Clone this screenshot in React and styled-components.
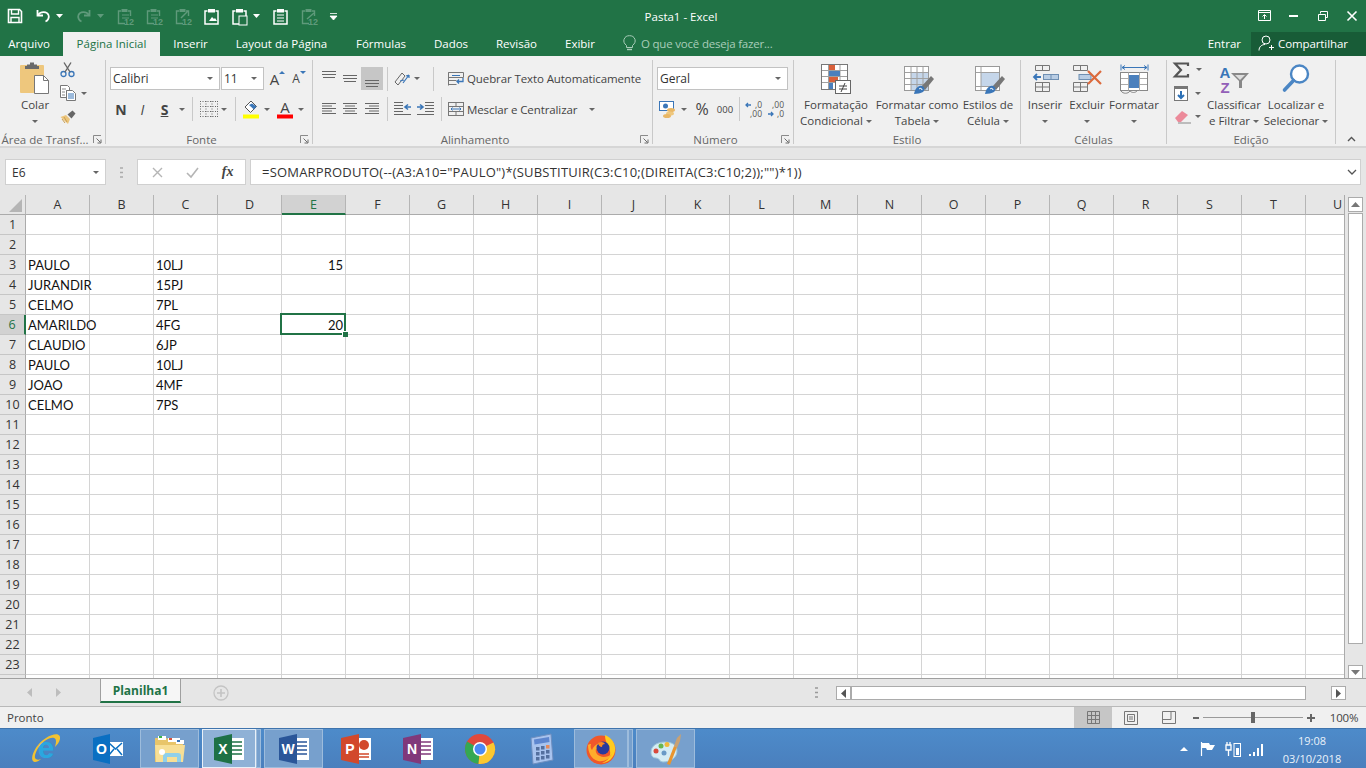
import React from "react";
import styled, { createGlobalStyle } from "styled-components";

const ui = `"Open Sans", "Noto Sans", sans-serif`;
const green = "#217346";
const cols = "ABCDEFGHIJKLMNOPQRSTU".split("");
const rows = Array.from({ length: 24 }, (_, i) => i + 1);

const cells = {
  3: { A: "PAULO", C: "10LJ", E: "15" },
  4: { A: "JURANDIR", C: "15PJ" },
  5: { A: "CELMO", C: "7PL" },
  6: { A: "AMARILDO", C: "4FG", E: "20" },
  7: { A: "CLAUDIO", C: "6JP" },
  8: { A: "PAULO", C: "10LJ" },
  9: { A: "JOAO", C: "4MF" },
  10: { A: "CELMO", C: "7PS" }
};

const Global = createGlobalStyle`
  html, body { margin: 0; padding: 0; background: #f0f0f0; }
  svg { display: block; flex: none; overflow: visible; }
`;

const Page = styled.div`
  width: 1366px;
  height: 768px;
  overflow: hidden;
  display: flex;
  flex-direction: column;
  font-family: ${ui};
  font-size: 11.5px;
  color: #444;
`;

/* title bar */
const TitleBar = styled.div`
  height: 32px;
  flex: none;
  background: ${green};
  display: grid;
  grid-template-columns: 1fr auto 1fr;
  align-items: center;
  color: #fff;
`;
const Qat = styled.div`
  display: flex;
  align-items: center;
  height: 30px;
`;
const QatBtn = styled.div`
  width: ${p => p.$w}px;
  margin-left: ${p => p.$ml || 0}px;
  height: 30px;
  display: flex;
  align-items: center;
  justify-content: center;
  color: ${p => (p.$dim ? "#5f9a7b" : "#fff")};
`;
const Title = styled.div`
  padding-right: 4px;
  font-size: 11.5px;
`;
const WinControls = styled.div`
  display: flex;
  justify-content: flex-end;
  height: 30px;
`;
const WinBtn = styled.div`
  width: 29px;
  display: flex;
  align-items: center;
  justify-content: center;
`;

/* tabs */
const TabBar = styled.div`
  height: 24px;
  flex: none;
  background: ${green};
  display: flex;
  color: #fff;
`;
const Tab = styled.div`
  width: ${p => p.$w}px;
  box-sizing: border-box;
  padding: 0 ${p => p.$pr || 0}px 2px 0;
  display: flex;
  align-items: center;
  justify-content: center;
  background: ${p => (p.$active ? "#f0f0f0" : "transparent")};
  color: ${p => (p.$active ? green : "#fff")};
`;
const TellMe = styled.div`
  margin-left: 14px;
  padding-bottom: 2px;
  display: flex;
  align-items: center;
  gap: 5px;
  color: #a9cdb9;
  letter-spacing: -0.2px;
  flex: 1;
`;
const SignIn = styled.div`
  display: flex;
  align-items: center;
  margin-right: 10px;
  padding-bottom: 2px;
`;
const Share = styled.div`
  width: 115px;
  display: flex;
  align-items: center;
  padding: 0 0 2px 7px;
  gap: 4px;
  box-sizing: border-box;
  background: #185c37;
  letter-spacing: -0.1px;
`;

/* ribbon */
const Ribbon = styled.div`
  height: 92px;
  flex: none;
  box-sizing: border-box;
  padding-top: 4px;
  display: flex;
  background: #f0f0f0;
  border-bottom: 2px solid #d6d6d6;
`;
const Group = styled.div`
  width: ${p => p.$w}px;
  flex: none;
  height: 84px;
  box-sizing: border-box;
  border-right: 1px solid #c9c9c9;
  display: flex;
  flex-direction: column;
`;
const Body = styled.div`
  height: 71px;
  flex: none;
  display: flex;
  padding-left: ${p => p.$pl || 0}px;
`;
const Foot = styled.div`
  height: 16px;
  flex: none;
  display: flex;
  align-items: center;
`;
const Label = styled.div`
  flex: 1;
  text-align: center;
  color: #666;
  font-size: 11.5px;
  white-space: nowrap;
`;
const Launcher = styled.div`
  width: 14px;
  margin-right: 1px;
  display: flex;
  justify-content: center;
`;
const Collapse = styled.div`
  flex: 1;
  height: 84px;
  display: flex;
  align-items: flex-end;
  justify-content: center;
`;
const Stack = styled.div`
  padding-top: 7px;
  display: flex;
  flex-direction: column;
  gap: 7px;
`;
const Row = styled.div`
  height: ${p => p.$h || 23}px;
  display: flex;
  align-items: center;
`;
const Btn = styled.div`
  width: ${p => p.$w}px;
  height: 100%;
  flex: none;
  display: flex;
  align-items: center;
  justify-content: center;
  background: ${p => (p.$active ? "#c6c6c6" : "transparent")};
`;
const Letter = styled.span`
  font-family: ${p => (p.$serif ? `"Liberation Serif", serif` : ui)};
  font-weight: ${p => (p.$bold ? 700 : 400)};
  font-style: ${p => (p.$italic ? "italic" : "normal")};
  text-decoration: ${p => (p.$under ? "underline" : "none")};
  font-size: ${p => p.$size || 13}px;
  color: #444;
`;
const Sep = styled.div`
  width: ${p => p.$w}px;
  height: 24px;
  flex: none;
  display: flex;
  justify-content: center;
  &::before {
    content: "";
    width: 1px;
    background: #c9c9c9;
  }
`;
const Caret = styled.i`
  display: inline-block;
  width: 0;
  height: 0;
  border-left: 3px solid transparent;
  border-right: 3px solid transparent;
  border-top: 3px solid #666;
  margin-left: ${p => p.$ml || 0}px;
  vertical-align: middle;
`;
const Combo = styled.div`
  width: ${p => p.$w}px;
  margin-left: ${p => p.$ml || 0}px;
  height: 23px;
  box-sizing: border-box;
  flex: none;
  background: #fff;
  border: 1px solid #c2c2c2;
  display: flex;
  align-items: center;
  justify-content: space-between;
  padding: 0 6px 0 2px;
  color: #333;
  font-size: 12px;
`;
const Command = styled.div`
  display: flex;
  align-items: center;
  gap: 3px;
  padding-left: 3px;
  white-space: nowrap;
  font-size: 11.5px;
  letter-spacing: -0.1px;
`;
const BigBtn = styled.div`
  width: ${p => p.$w}px;
  flex: none;
  display: flex;
  flex-direction: column;
  align-items: center;
  white-space: nowrap;
`;
const BigIcon = styled.div`
  height: 37px;
  display: flex;
  align-items: flex-start;
  justify-content: center;
  padding-top: ${p => p.$pt ?? 3}px;
  box-sizing: border-box;
`;
const BigText = styled.div`
  height: 16px;
  line-height: 16px;
  display: flex;
  align-items: center;
`;
const SmallCol = styled.div`
  width: ${p => p.$w}px;
  margin-top: -2px;
  flex: none;
  display: flex;
  flex-direction: column;
`;
const SmallRow = styled.div`
  height: 23.5px;
  display: flex;
  align-items: center;
  padding-left: ${p => p.$pl || 0}px;
  gap: ${p => p.$gap || 7}px;
`;

/* formula bar */
const FormulaBar = styled.div`
  height: 47px;
  flex: none;
  box-sizing: border-box;
  background: #e6e6e6;
  padding: 11px 5px 10px 5px;
  display: flex;
`;
const FieldBox = styled.div`
  background: #fff;
  border: 1px solid #d0d0d0;
  box-sizing: border-box;
  display: flex;
  align-items: center;
  color: #333;
  font-size: 12px;
`;
const NameBox = styled(FieldBox)`
  width: 101px;
  padding: 0 6px;
  justify-content: space-between;
`;
const Dots = styled.div`
  width: 31px;
  display: flex;
  align-items: center;
  justify-content: center;
`;
const FxBox = styled(FieldBox)`
  width: 109px;
  justify-content: space-around;
  margin-right: 4px;
  padding: 0 0 0 2px;
  color: #aaa;
`;
const Formula = styled(FieldBox)`
  flex: 1;
  padding: 0 3px 0 11px;
  justify-content: space-between;
  white-space: nowrap;
  font-size: 13px;
  letter-spacing: 0.2px;
`;

/* sheet */
const Sheet = styled.div`
  height: 483px;
  flex: none;
  display: flex;
  background: #e6e6e6;
`;
const GridClip = styled.div`
  width: 1345px;
  height: 483px;
  overflow: hidden;
  background: #fff;
  border-right: 1px solid #ababab;
  box-sizing: border-box;
`;
const Grid = styled.div`
  display: grid;
  grid-template-columns: 26px repeat(21, 64px);
  grid-auto-rows: 20px;
  width: 1370px;
  color: #111;
`;
const Corner = styled.div`
  background: #e6e6e6;
  border-right: 1px solid #b5b5b5;
  border-bottom: 1px solid #ababab;
  box-sizing: border-box;
  display: flex;
  align-items: flex-end;
  justify-content: flex-end;
  padding: 0 3px 2px 0;
`;
const ColHead = styled.div`
  box-sizing: border-box;
  display: flex;
  align-items: center;
  justify-content: center;
  font-size: 12.5px;
  color: ${p => (p.$on ? green : "#333")};
  background: ${p => (p.$on ? "#d2d2d2" : "#e6e6e6")};
  border-right: 1px solid #b5b5b5;
  border-bottom: ${p => (p.$on ? `2px solid ${green}` : "1px solid #ababab")};
`;
const RowHead = styled.div`
  box-sizing: border-box;
  display: flex;
  align-items: center;
  justify-content: center;
  font-size: 12.5px;
  color: ${p => (p.$on ? green : "#333")};
  background: ${p => (p.$on ? "#d2d2d2" : "#e6e6e6")};
  border-bottom: 1px solid #c6c6c6;
  border-right: ${p => (p.$on ? `2px solid ${green}` : "1px solid #ababab")};
`;
const Cell = styled.div`
  box-sizing: border-box;
  position: relative;
  border-right: 1px solid #d4d4d4;
  border-bottom: 1px solid #d4d4d4;
  display: flex;
  align-items: center;
  justify-content: ${p => (p.$num ? "flex-end" : "flex-start")};
  padding: 0 2px;
  font-family: "Lato", sans-serif;
  font-size: 13px;
  white-space: nowrap;
`;
const Selection = styled.div`
  position: absolute;
  left: -2px;
  right: -1px;
  top: -2px;
  bottom: -1px;
  border: 2px solid ${green};
  z-index: 2;
  &::after {
    content: "";
    position: absolute;
    right: -4px;
    bottom: -4px;
    width: 5px;
    height: 5px;
    background: ${green};
    border: 1px solid #fff;
    border-right-width: 0;
    border-bottom-width: 0;
  }
`;
const VScroll = styled.div`
  flex: 1;
  padding: 2px 3px 0 3px;
  display: flex;
  flex-direction: column;
`;
const ScrollBtn = styled.div`
  width: ${p => p.$w || 15}px;
  height: ${p => p.$h || 15}px;
  box-sizing: border-box;
  flex: none;
  background: #fff;
  border: 1px solid #ababab;
  display: flex;
  align-items: center;
  justify-content: center;
`;
const VThumb = styled.div`
  width: 15px;
  height: 431px;
  box-sizing: border-box;
  flex: none;
  margin: 1px 0 21px;
  background: #fff;
  border: 1px solid #ababab;
`;

/* sheet tabs */
const SheetBar = styled.div`
  height: 29px;
  flex: none;
  box-sizing: border-box;
  background: #e6e6e6;
  border-top: 1px solid #9f9f9f;
  border-bottom: 1px solid #b9b9b9;
  display: flex;
`;
const NavBtn = styled.div`
  width: 29px;
  display: flex;
  align-items: center;
  justify-content: center;
  margin-left: ${p => p.$ml || 0}px;
`;
const SheetTab = styled.div`
  width: 81px;
  height: 24px;
  margin-left: 27.5px;
  box-sizing: border-box;
  flex: none;
  background: #f6f6f6;
  border-left: 1px solid #9f9f9f;
  border-right: 1px solid #9f9f9f;
  border-bottom: 2px solid ${green};
  color: ${green};
  font-weight: 700;
  font-size: 12px;
  display: flex;
  align-items: center;
  justify-content: center;
`;
const AddSheet = styled.div`
  margin-left: 32px;
  display: flex;
  align-items: center;
  flex: 1;
`;
const HScroll = styled.div`
  width: 509px;
  margin-right: 21px;
  padding-top: 7px;
  display: flex;
`;
const HTrack = styled.div`
  width: 455px;
  height: 14px;
  box-sizing: border-box;
  flex: none;
  background: #fff;
  border: 1px solid #ababab;
  margin-right: 25px;
`;
const DotsH = styled.div`
  width: 30px;
  display: flex;
  align-items: center;
  padding-left: 9px;
  box-sizing: border-box;
`;

/* status bar */
const StatusBar = styled.div`
  height: 21px;
  flex: none;
  background: #f0f0f0;
  display: flex;
  align-items: center;
  padding-left: 7px;
`;
const StatusText = styled.div`
  flex: 1;
`;
const ViewBtn = styled.div`
  width: 38px;
  height: 21px;
  display: flex;
  align-items: center;
  justify-content: center;
  background: ${p => (p.$active ? "#c6c6c6" : "transparent")};
`;
const ZoomSign = styled.div`
  width: ${p => p.$w}px;
  display: flex;
  justify-content: center;
`;
const ZoomTrack = styled.div`
  width: 100px;
  height: 11px;
  display: flex;
  justify-content: center;
  background: linear-gradient(#9a9a9a, #9a9a9a) center / 100% 1px no-repeat;
`;
const ZoomThumb = styled.div`
  width: 4px;
  background: #666;
`;
const ZoomValue = styled.div`
  width: 48px;
  text-align: center;
  padding-left: 4px;
  box-sizing: border-box;
  letter-spacing: -0.2px;
`;

/* taskbar */
const Taskbar = styled.div`
  height: 40px;
  flex: none;
  box-sizing: border-box;
  background: linear-gradient(#4d8bca, #4a7fbd);
  border-top: 1px solid #3f74ad;
  display: flex;
  padding-left: 16px;
  gap: 3px;
`;
const TaskSlot = styled.div`
  width: 59px;
  height: 39px;
  box-sizing: border-box;
  flex: none;
  display: flex;
`;
const TaskFace = styled.div`
  flex: 1;
  display: flex;
  align-items: center;
  justify-content: center;
  box-sizing: border-box;
  background: ${p => (p.$active ? "#8fb1d6" : p.$open ? "#77a0cd" : "transparent")};
  border: 1px solid ${p => (p.$active ? "#e8f0f8" : p.$open ? "#9dbcdc" : "transparent")};
`;
const TaskEdge = styled.div`
  width: 5px;
  flex: none;
  box-sizing: border-box;
  background: #77a0cd;
  border: 1px solid #9dbcdc;
`;
const Tray = styled.div`
  margin-left: auto;
  margin-right: 8px;
  display: flex;
  align-items: center;
  color: #fff;
`;
const TrayItem = styled.div`
  width: ${p => p.$w}px;
  display: flex;
  justify-content: center;
`;
const Clock = styled.div`
  width: 92px;
  padding-top: 2px;
  text-align: center;
  font-size: 11px;
  line-height: 18px;
  color: #eaf2fa;
`;

/* icons */
const S = ({ w, h = w, children, ...rest }) => (
  <svg width={w} height={h} viewBox={`0 0 ${w} ${h}`} fill="none" {...rest}>
    {children}
  </svg>
);
const SaveI = () => (
  <S w={16}>
    <path d="M1.5 1.5h11l2 2v11h-13z" stroke="#fff" strokeWidth="1.6" />
    <path d="M4.5 2v4h7V2M4 14.5v-5h8v5" stroke="#fff" strokeWidth="1.4" />
  </S>
);
const UndoI = ({ dim }) => (
  <S w={16} style={dim ? { transform: "scaleX(-1)" } : undefined}>
    <path d="M2.5 2v5.5H8" stroke="currentColor" strokeWidth="1.8" />
    <path d="M3 7c3-4 9-3.5 10.5 0 1 2.5-.5 5.5-3 6.5" stroke="currentColor" strokeWidth="1.8" />
  </S>
);
const QCaret = ({ c = "#fff" }) => (
  <S w={7} h={4}>
    <path d="M0 0h7L3.5 4z" fill={c} />
  </S>
);
const QDoc12 = ({ inner }) => (
  <S w={17}>
    <path d="M4 3H1.5v12.5H8M11 3h2.5v5" stroke="currentColor" strokeWidth="1.4" />
    <rect x="4.5" y="1" width="6" height="3" fill="currentColor" />
    {inner}
    <text x="7" y="16.5" fontSize="9" fontFamily="Liberation Sans" fontWeight="700" fill="currentColor">
      12
    </text>
  </S>
);
const QClip = ({ children }) => (
  <S w={17}>
    <path d="M4.5 3H2v13h13V3h-2.5" stroke="currentColor" strokeWidth="1.5" />
    <rect x="5" y="1" width="7" height="3.5" fill="currentColor" />
    {children}
  </S>
);
const PasteI = () => (
  <S w={30} h={32}>
    <rect x="0" y="3" width="24" height="28" rx="1" fill="#eec77d" />
    <path d="M7 4V2.5h3v-2h4v2h3V4h2v3H5V4z" fill="#6a6a6a" />
    <path d="M14.5 13.5h9l5 5v13h-14z" fill="#fff" stroke="#777" />
    <path d="M23.5 13.5v5h5" stroke="#777" />
  </S>
);
const CutI = () => (
  <S w={15}>
    <circle cx="3.5" cy="12" r="2.5" stroke="#3a76b8" strokeWidth="1.3" />
    <circle cx="11.5" cy="12" r="2.5" stroke="#3a76b8" strokeWidth="1.3" />
    <path d="M5 10 11 .5M10 10 4 .5" stroke="#666" strokeWidth="1.4" />
  </S>
);
const CopyI = () => (
  <S w={16}>
    <path d="M.5.5h7l2 2v3h-3v7H.5z" fill="#fff" stroke="#777" />
    <path d="M6.5 5.5h6l3 3v7h-9z" fill="#fff" stroke="#777" />
    <path d="M2 4h4M2 7h3M2 10h3" stroke="#888" />
    <path d="M8 9h6M8 11h6M8 13h6" stroke="#3a76b8" />
  </S>
);
const PainterI = () => (
  <S w={16} h={14}>
    <path d="M.5 7 6 5l4 4-2 5z" fill="#ecc57c" />
    <path d="M2 9l3 4M4 7l3 5" stroke="#c99e52" />
    <path d="m7.5 4.5 5-4 3 3-4 5z" fill="#666" />
  </S>
);
const Launch = () => (
  <S w={9}>
    <path d="M.5 8V.5H8" stroke="#8a8a8a" />
    <path d="m3.5 3.5 4 4M8 4.5V8H4.5" stroke="#6b6b6b" />
  </S>
);
const BordersI = () => (
  <S w={20} h={19}>
    <path d="M1 1.5h18M1 6.5h18M1 11.5h18M1 16.5h18M1.5 1v17M7 1v17M13 1v17M18.5 1v17" stroke="#666" strokeDasharray="1 1.5" />
  </S>
);
const FillI = () => (
  <S w={17} h={19}>
    <path d="M8 1 2 7l5.5 5.5 6-6z" fill="#fff" stroke="#555" />
    <path d="M9 3.5l4.5 3L11 9.5 6 5z" fill="#3a76b8" />
    <rect y="14.5" width="16" height="4" fill="#ffff00" />
  </S>
);
const ColorA = () => (
  <S w={16} h={19}>
    <text x="8" y="13" textAnchor="middle" fontSize="15" fontFamily="Open Sans" fill="#444">
      A
    </text>
    <rect y="14.5" width="16" height="4" fill="#f00" />
  </S>
);
const AlignV = ({ y }) => (
  <S w={14}>
    {[0, 1, 2].map(i => (
      <path key={i} d={`M${i === 2 ? 1 : 0} ${y + i * 3 + 0.5}h${i === 2 ? 12 : 14}`} stroke="#666" />
    ))}
  </S>
);
const AlignH = ({ kind }) => {
  const w = [14, 10, 14, 10, 14];
  return (
    <S w={14} h={12}>
      {w.map((l, i) => {
        const x = kind === "left" ? 0 : kind === "right" ? 14 - l : (14 - l) / 2;
        return <path key={i} d={`M${x} ${i * 2.5 + 0.5}h${l}`} stroke="#666" />;
      })}
    </S>
  );
};
const OrientI = () => (
  <S w={18}>
    <path d="M2 12 9 3l3 3-7 9z" stroke="#666" fill="none" />
    <path d="M7 11l4-1M10 13l6-8m0 0-3 1m3-1v3" stroke="#3a76b8" strokeWidth="1.2" />
  </S>
);
const IndentI = ({ flip }) => (
  <S w={17} h={14} style={flip ? { transform: "scaleX(-1)" } : undefined}>
    <path d="M8 .5h9M8 3.5h9M8 6.5h9M8 9.5h9M0 12.5h17" stroke="#666" />
    <path d="M0 5h5M3 2.5 6 5 3 7.5" stroke="#3a76b8" strokeWidth="1.6" />
  </S>
);
const WrapI = () => (
  <S w={16}>
    <path d="M.5 1.5h15v5H.5zM.5 9.5h8M.5 13.5h8M.5 1.5v13" stroke="#777" />
    <path d="M4 4.5h8" stroke="#3a76b8" />
    <path d="M15 7v3.5H9m2-2-2 2 2 2" stroke="#3a76b8" strokeWidth="1.3" />
  </S>
);
const MergeI = () => (
  <S w={16}>
    <rect x=".5" y="1.5" width="15" height="13" stroke="#777" />
    <path d="M.5 5.5h15M.5 10.5h15M8 1.5v4M8 10.5v4" stroke="#777" />
    <path d="M3 8h10M4.5 6.5 3 8l1.5 1.5m7-3L13 8l-1.500 1.500" stroke="#3a76b8" />
  </S>
);
const CurrencyI = () => (
  <S w={17} h={17}>
    <rect x=".5" y=".5" width="14" height="9" fill="#fff" stroke="#3a76b8" />
    <circle cx="6.5" cy="5" r="2.5" fill="#3a76b8" />
    <ellipse cx="12" cy="9" rx="4" ry="2" fill="#e9b765" />
    <ellipse cx="11" cy="12.5" rx="4" ry="2" fill="#eec77d" />
    <ellipse cx="8" cy="15" rx="4" ry="2" fill="#e9b765" />
  </S>
);
const Decimal = ({ up }) => (
  <S w={16} h={17}>
    <text x="16" y="7" textAnchor="end" fontSize="8.5" fontFamily="Open Sans" fill="#555">
      {up ? ",0" : ",00"}
    </text>
    <text x="16" y="16" textAnchor="end" fontSize="8.5" fontFamily="Open Sans" fill="#555">
      {up ? ",00" : ",0"}
    </text>
    <path d={up ? "M0 4h5M2 2 0 4l2 2" : "M0 13h5M3 11l2 2-2 2"} stroke="#3a76b8" strokeWidth="1.3" />
  </S>
);
const CondI = () => (
  <S w={31} h={31}>
    <rect x=".5" y=".5" width="26" height="25" fill="#fff" stroke="#777" />
    <path d="M7.5 1v24M19 1v24M1 6.5h25M1 12.5h25M1 18.5h25" stroke="#a0a0a0" />
    <rect x="8" y="1" width="6" height="5" fill="#d9603b" />
    <rect x="8" y="7" width="11" height="5" fill="#4b80bd" />
    <rect x="8" y="13" width="9" height="5" fill="#d9603b" />
    <rect x="8" y="19" width="4" height="6" fill="#4b80bd" />
    <rect x="14.5" y="16.5" width="15" height="13" fill="#fff" stroke="#666" />
    <path d="M18 22h8M18 25h8M24 19l-4 9" stroke="#444" />
  </S>
);
const Brush = () => (
  <g transform="translate(-2 -3)">
    <path d="m19 24 10-11 3 3-9 11z" fill="#777" />
    <path d="M12 31c1-5 4-9 8-8 3 1 3 4 1 6-2 1-6 2-9 2z" fill="#3a76b8" />
    <path d="M17 26c1-1 3-1 3 1" stroke="#fff" />
  </g>
);
const TableI = () => (
  <S w={27} h={28}>
    <rect x=".5" y=".5" width="24" height="24" fill="#fff" stroke="#999" />
    <rect x="7" y="6" width="17" height="18" fill="#c5d6ea" />
    <path d="M7 1v23M13 1v23M19 1v23M1 6.5h23M1 12.5h23M1 18.5h23" stroke="#a0a0a0" />
    <Brush />
  </S>
);
const StylesI = () => (
  <S w={27} h={28}>
    <rect x=".5" y=".5" width="24" height="24" fill="#fff" stroke="#999" />
    <rect x="6" y="6" width="18" height="14" fill="#c5d6ea" />
    <path d="M6 1v23M1 6.5h23M1 20.5h23" stroke="#a0a0a0" />
    <Brush />
  </S>
);
const InsertI = () => (
  <S w={27} h={29}>
    <path d="M3.5 1.5h14v5h-14zM10.5 1.5v5M3.5 18.5h14v9h-14zM3.5 23h14M10.5 18.5v9" stroke="#777" />
    <rect x="11.5" y="10.5" width="15" height="5" fill="#b9cde4" stroke="#6f8fb2" />
    <path d="M19 10.5v5" stroke="#6f8fb2" />
    <path d="M9 13H2m3-3-3 3 3 3" stroke="#3a76b8" strokeWidth="1.8" />
  </S>
);
const DeleteI = () => (
  <S w={31} h={29}>
    <path d="M1.5 1.5h14v5h-14zM8.5 1.5v5M1.5 18.5h14v9h-14zM1.5 23h14M8.5 18.5v9" stroke="#777" />
    <rect x="7" y="10.5" width="12" height="5" fill="#b9cde4" stroke="#6f8fb2" />
    <path d="m16 7 13 13M29 7 16 20" stroke="#dc6a3c" strokeWidth="2.2" />
  </S>
);
const FormatI = () => (
  <S w={29} h={31}>
    <path d="M1 .5v6M28 .5v6M2 3.5h25M5 1.5l-3 2 3 2M24 1.5l3 2-3 2" stroke="#3a76b8" />
    <rect x=".5" y="8.5" width="27" height="18" fill="#fff" stroke="#888" />
    <path d="M8.5 8.5v18M19.5 8.5v18M1 14.5h26M1 20.5h26" stroke="#aaa" />
    <rect x="9" y="11" width="10" height="13" fill="#4b80bd" />
    <path d="M1 27c2 3 7 3 9 0M10 27c2 2 5 2 7 0" stroke="#888" />
  </S>
);
const SigmaI = () => (
  <S w={16}>
    <path d="M15 4V1.5H2L8 8l-6 6.5h13V12" stroke="#555" strokeWidth="2.2" />
  </S>
);
const FillDownI = () => (
  <S w={14} h={15}>
    <rect x=".5" y=".5" width="13" height="14" fill="#fff" stroke="#777" />
    <rect x="1" y="1" width="12" height="2" fill="#777" />
    <path d="M7 5v7M4 9l3 3 3-3" stroke="#2b6fb5" strokeWidth="2" />
  </S>
);
const EraserI = () => (
  <S w={17} h={14}>
    <path d="M1 8 8 1l6 4-7 7H4z" fill="#ec8a9a" />
    <path d="M4 13h13" stroke="#888" />
  </S>
);
const SortI = () => (
  <S w={31} h={31}>
    <text x="6" y="14" textAnchor="middle" fontSize="15" fontWeight="700" fontFamily="Liberation Sans" fill="#3a76b8">
      A
    </text>
    <text x="6" y="29" textAnchor="middle" fontSize="15" fontWeight="700" fontFamily="Liberation Sans" fill="#9360b8">
      Z
    </text>
    <path d="M12 9h18l-7 8v7h-3v-7z" fill="#888" />
    <path d="M16 11h10l-5 5z" fill="#ddd" />
  </S>
);
const FindI = () => (
  <S w={28} h={30}>
    <circle cx="17.5" cy="10" r="8.5" fill="#fff" stroke="#4b86c4" strokeWidth="2.4" />
    <path d="M11.5 16.5 2.5 26" stroke="#4b86c4" strokeWidth="3.6" strokeLinecap="round" />
  </S>
);
const Bulb = () => (
  <S w={13} h={16}>
    <path d="M3.5 10.5C1 8.5.5 6.5 1 4.5 2 1.5 4 .7 6.5.7s4.5.8 5.5 3.8c.5 2 0 4-2.5 6v2h-6z" stroke="#a9cdb9" />
    <path d="M4 14.5h5" stroke="#a9cdb9" strokeWidth="1.4" />
  </S>
);
const ShareI = () => (
  <S w={16}>
    <circle cx="8" cy="5" r="4" stroke="#fff" />
    <path d="M1 15.5c0-4 3-6 6-6M11 12.5h5M13.5 10v5" stroke="#fff" />
  </S>
);
const LogoFrame = ({ children }) => (
  <S w={32} h={32}>
    {children}
  </S>
);
const LogoText = ({ x, y, size, children, fill = "#fff" }) => (
  <text x={x} y={y} textAnchor="middle" fontFamily="Liberation Sans" fontWeight="700" fontSize={size} fill={fill}>
    {children}
  </text>
);
const IeLogo = () => (
  <LogoFrame>
    <path d="M3 28C0 24 6 11 16 5 24 0 31 0 30 6c-.5 3-3 6-5 8 1-4 2-8-1-9-4-1-12 3-17 12-2 4-3 8-1 9 1 1 3 1 5 0-3 3-7 4-8 2z" fill="#f1c232" />
    <LogoText x="16" y="25" size="30" fill="#2aa7e0">e</LogoText>
  </LogoFrame>
);
const OutlookLogo = () => (
  <LogoFrame>
    <rect x="16" y="9" width="15" height="14" fill="#fff" />
    <path d="m17 10 6.5 6 6.5-6M17 22l5-6M30 22l-5-6" stroke="#0a6fc2" strokeWidth="1.5" />
    <path d="M1 5 18 1v30L1 27z" fill="#0a6fc2" />
    <LogoText x="9.5" y="21" size="14">O</LogoText>
  </LogoFrame>
);
const FolderLogo = () => (
  <LogoFrame>
    <path d="M1 5h12l2 2h14v22H1z" fill="#e8c56a" />
    <rect x="4" y="3" width="8" height="4" fill="#fff" />
    <rect x="5" y="3" width="3" height="2" fill="#3db54a" />
    <rect x="14" y="5" width="12" height="4" fill="#fff" />
    <rect x="15" y="5" width="3" height="2" fill="#d9503b" />
    <rect x="22" y="7" width="8" height="4" fill="#fff" />
    <rect x="23" y="7" width="3" height="2" fill="#3a76b8" />
    <path d="M1 12h30l-2 17H2z" fill="#f7df96" />
    <path d="M9 29v-6c0-2 1-3 3-3h12c2 0 3 1 3 3v6h-4v-5H13v5z" fill="#8fd0ea" />
    <circle cx="8" cy="19" r="3" fill="#fff" />
  </LogoFrame>
);
const OfficeLogo = ({ color, letter, light }) => (
  <LogoFrame>
    <rect x="14" y="5" width="17" height="22" fill={light} />
    <path d="M18 9h11M18 13h11M18 17h11M18 21h11" stroke={color} strokeWidth="1.5" />
    <path d="M1 5 19 1v30L1 27z" fill={color} />
    <LogoText x="10" y="21" size="14">{letter}</LogoText>
  </LogoFrame>
);
const PptLogo = () => (
  <LogoFrame>
    <path d="M17 5h14v22H17z" fill="#fff" />
    <circle cx="24" cy="12" r="5" fill="#d2482b" />
    <path d="M19 21h10M19 24h10" stroke="#d2482b" strokeWidth="1.5" />
    <path d="M1 5 19 1v30L1 27z" fill="#d2482b" />
    <LogoText x="10" y="21" size="14">P</LogoText>
  </LogoFrame>
);
const ChromeLogo = () => (
  <LogoFrame>
    <circle cx="16" cy="16" r="15" fill="#e0483b" />
    <path d="M16 16 3 8.5A15 15 0 0 0 14.5 31z" fill="#34a853" />
    <path d="M16 16 29.5 9.5A15 15 0 0 1 14.5 31z" fill="#fbc830" />
    <circle cx="16" cy="16" r="7" fill="#fff" />
    <circle cx="16" cy="16" r="5.5" fill="#4a8af4" />
  </LogoFrame>
);
const CalcLogo = () => (
  <S w={24} h={32}>
    <path d="M1 5 21 1l2 26-20 4z" fill="#a8c3ee" stroke="#6f8fc0" />
    <path d="M4 6.5 19 4l.5 5-15 2.5z" fill="#5d86cf" />
    {[0, 1, 2].map(r =>
      [0, 1, 2].map(c => (
        <rect key={`${r}${c}`} x={6 + c * 5} y={14 + r * 5 - c} width="3.5" height="3.5" fill={r === 0 && c === 2 ? "#e58b5d" : "#54709f"} />
      ))
    )}
  </S>
);
const FirefoxLogo = () => (
  <LogoFrame>
    <circle cx="16" cy="17" r="14.5" fill="#f0572a" />
    <path d="M20 2c7 3 11 9 10 16-1 7-7 12-13 12 6-2 9-7 8-12-1-6-5-8-5-16z" fill="#ffcb1f" />
    <path d="M3 12c0 7 3 14 10 16 6 1 12-2 14-7-4 3-9 4-12 2-3-1-5-4-4-7 2 1 5 1 6-1-2-1-3-3-2-5-4 1-7 4-8 7-1-1-2-3-1-6-1 0-2 0-3 1z" fill="#ffac2b" />
    <circle cx="18" cy="15" r="6.5" fill="#2a3a9c" />
    <path d="M13 10c3-2 6-1 7 1-2 0-3 1-3 3-2 0-4-2-4-4z" fill="#ff8a1f" />
  </LogoFrame>
);
const PaintLogo = () => (
  <LogoFrame>
    <path d="M1 19C1 13 7 9 15 9c7 0 12 3 12 9 0 7-7 11-14 11-4 0-3-4-7-4-3 0-5-2-5-6z" fill="#d5ecf4" stroke="#9dc6d8" />
    <circle cx="6" cy="18" r="2.5" fill="#d94a3b" />
    <circle cx="11" cy="13" r="2.5" fill="#6ab64f" />
    <circle cx="17" cy="11.5" r="2.5" fill="#f0b93a" />
    <circle cx="14" cy="20" r="2.5" fill="#6a9ac6" />
    <path d="m17 31 7-18 3 1-7 18z" fill="#e8952f" />
    <path d="m24 13 3-8 4-4-1 7-3 7z" fill="#c9a173" />
  </LogoFrame>
);

const Group1 = () => (
  <Group $w={106}>
    <Body $pl={10}>
      <BigBtn $w={50}>
        <BigIcon $pt={2}>
          <PasteI />
        </BigIcon>
        <BigText>Colar</BigText>
        <BigText>
          <Caret />
        </BigText>
      </BigBtn>
      <SmallCol $w={40}>
        <SmallRow>
          <CutI />
        </SmallRow>
        <SmallRow $gap={5}>
          <CopyI />
          <Caret />
        </SmallRow>
        <SmallRow>
          <PainterI />
        </SmallRow>
      </SmallCol>
    </Body>
    <Foot>
      <Label>Área de Transf...</Label>
      <Launcher>
        <Launch />
      </Launcher>
    </Foot>
  </Group>
);

const Group2 = () => (
  <Group $w={207}>
    <Body $pl={4}>
      <Stack>
        <Row>
          <Combo $w={110}>
            Calibri <Caret />
          </Combo>
          <Combo $w={43} $ml={1}>
            11 <Caret />
          </Combo>
          <Btn $w={27}>
            <Letter $size={15}>A</Letter>
            <S w={6} h={3} style={{ marginBottom: 12 }}>
              <path d="M0 3h6L3 0z" fill="#3a76b8" />
            </S>
          </Btn>
          <Btn $w={16}>
            <Letter $size={12}>A</Letter>
            <S w={6} h={3} style={{ marginBottom: 12 }}>
              <path d="M0 0h6L3 3z" fill="#3a76b8" />
            </S>
          </Btn>
        </Row>
        <Row $h={24}>
          <Btn $w={22}>
            <Letter $bold $size={14}>N</Letter>
          </Btn>
          <Btn $w={21}>
            <Letter $italic $size={14}>I</Letter>
          </Btn>
          <Btn $w={23}>
            <Letter $bold $under $size={14}>S</Letter>
          </Btn>
          <Btn $w={11}>
            <Caret />
          </Btn>
          <Sep $w={11} />
          <Btn $w={22}>
            <BordersI />
          </Btn>
          <Btn $w={8}>
            <Caret />
          </Btn>
          <Sep $w={14} />
          <Btn $w={18}>
            <FillI />
          </Btn>
          <Btn $w={14}>
            <Caret />
          </Btn>
          <Btn $w={22}>
            <ColorA />
          </Btn>
          <Btn $w={10}>
            <Caret />
          </Btn>
        </Row>
      </Stack>
    </Body>
    <Foot>
      <Label>Fonte</Label>
      <Launcher>
        <Launch />
      </Launcher>
    </Foot>
  </Group>
);

const Group3 = () => (
  <Group $w={340}>
    <Body $pl={6}>
      <Stack>
        <Row>
          <Btn $w={20}><AlignV y={-1} /></Btn>
          <Btn $w={22}><AlignV y={3} /></Btn>
          <Btn $w={22} $active><AlignV y={8} /></Btn>
          <Sep $w={8} />
          <Btn $w={22}><OrientI /></Btn>
          <Btn $w={8}><Caret /></Btn>
          <Sep $w={24} />
          <Command>
            <WrapI />
            Quebrar Texto Automaticamente
          </Command>
        </Row>
        <Row $h={24}>
          <Btn $w={20}><AlignH kind="left" /></Btn>
          <Btn $w={22}><AlignH kind="center" /></Btn>
          <Btn $w={22}><AlignH kind="right" /></Btn>
          <Sep $w={8} />
          <Btn $w={22}><IndentI flip /></Btn>
          <Btn $w={24}><IndentI /></Btn>
          <Sep $w={8} />
          <Command>
            <MergeI />
            Mesclar e Centralizar
            <Caret $ml={9} />
          </Command>
        </Row>
      </Stack>
    </Body>
    <Foot>
      <Label>Alinhamento</Label>
      <Launcher>
        <Launch />
      </Launcher>
    </Foot>
  </Group>
);

const Group4 = () => (
  <Group $w={141}>
    <Body $pl={4}>
      <Stack>
        <Row>
          <Combo $w={131}>
            Geral <Caret />
          </Combo>
        </Row>
        <Row $h={24}>
          <Btn $w={21}><CurrencyI /></Btn>
          <Btn $w={12}><Caret /></Btn>
          <Btn $w={24}><Letter $size={16}>%</Letter></Btn>
          <Btn $w={22}><Letter $size={9.5}>000</Letter></Btn>
          <Sep $w={7} />
          <Btn $w={22}><Decimal up /></Btn>
          <Btn $w={21}><Decimal /></Btn>
        </Row>
      </Stack>
    </Body>
    <Foot>
      <Label>Número</Label>
      <Launcher>
        <Launch />
      </Launcher>
    </Foot>
  </Group>
);

const Big = ({ w, icon, pt, l1, l2 }) => (
  <BigBtn $w={w}>
    <BigIcon $pt={pt}>{icon}</BigIcon>
    <BigText>{l1}</BigText>
    <BigText>
      {l2}
      <Caret $ml={l2 ? 3 : 0} />
    </BigText>
  </BigBtn>
);

const Group5 = () => (
  <Group $w={227}>
    <Body $pl={1}>
      <Big w={82} pt={4} icon={<CondI />} l1="Formatação" l2="Condicional" />
      <Big w={80} pt={6} icon={<TableI />} l1="Formatar como" l2="Tabela" />
      <Big w={62} pt={6} icon={<StylesI />} l1="Estilos de" l2="Célula" />
    </Body>
    <Foot>
      <Label>Estilo</Label>
    </Foot>
  </Group>
);

const Group6 = () => (
  <Group $w={146}>
    <Body>
      <Big w={48} pt={4} icon={<InsertI />} l1="Inserir" />
      <Big w={36} pt={4} icon={<DeleteI />} l1="Excluir" />
      <Big w={58} pt={4} icon={<FormatI />} l1="Formatar" />
    </Body>
    <Foot>
      <Label>Células</Label>
    </Foot>
  </Group>
);

const Group7 = () => (
  <Group $w={169}>
    <Body>
      <SmallCol $w={36}>
        <SmallRow $pl={6}>
          <SigmaI />
          <Caret />
        </SmallRow>
        <SmallRow $pl={7}>
          <FillDownI />
          <Caret />
        </SmallRow>
        <SmallRow $pl={7} $gap={4}>
          <EraserI />
          <Caret />
        </SmallRow>
      </SmallCol>
      <Big w={62} pt={4} icon={<SortI />} l1="Classificar" l2="e Filtrar" />
      <Big w={62} pt={4} icon={<FindI />} l1="Localizar e" l2="Selecionar" />
    </Body>
    <Foot>
      <Label>Edição</Label>
    </Foot>
  </Group>
);

const dimDoc = <path d="M5 7h7M5 10h7" stroke="currentColor" />;

export default function App() {
  return (
    <Page>
      <Global />
      <TitleBar>
        <Qat>
          <QatBtn $w={30}><SaveI /></QatBtn>
          <QatBtn $w={25}><UndoI /></QatBtn>
          <QatBtn $w={9}><QCaret /></QatBtn>
          <QatBtn $w={26} $ml={7} $dim><UndoI dim /></QatBtn>
          <QatBtn $w={6} $dim><QCaret c="#5f9a7b" /></QatBtn>
          <QatBtn $w={29} $ml={7.5} $dim><QDoc12 inner={dimDoc} /></QatBtn>
          <QatBtn $w={29} $dim><QDoc12 inner={dimDoc} /></QatBtn>
          <QatBtn $w={29} $dim><QDoc12 inner={<path d="M6 10l7-7" stroke="currentColor" strokeWidth="1.5" />} /></QatBtn>
          <QatBtn $w={28}>
            <QClip>
              <path d="M6 13l3-4 2 2 1-1 2 3z" fill="currentColor" />
            </QClip>
          </QatBtn>
          <QatBtn $w={28}>
            <QClip>
              <rect x="8" y="8" width="8" height="9" fill="#217346" stroke="currentColor" />
            </QClip>
          </QatBtn>
          <QatBtn $w={5}><QCaret /></QatBtn>
          <QatBtn $w={29} $ml={7}>
            <QClip>
              <path d="M5 7h7M5 10h7M5 13h7" stroke="currentColor" />
            </QClip>
          </QatBtn>
          <QatBtn $w={29} $dim><QDoc12 inner={<path d="M6 11l7-6" stroke="currentColor" strokeWidth="1.5" />} /></QatBtn>
          <QatBtn $w={19}>
            <S w={7} h={7}>
              <path d="M0 .5h7M0 3h7L3.5 7z" stroke="#fff" strokeWidth=".8" fill="#fff" />
            </S>
          </QatBtn>
        </Qat>
        <Title>Pasta1 - Excel</Title>
        <WinControls>
          <WinBtn>
            <S w={13} h={12}>
              <path d="M.5.5h12v10H.5zM1 2.5h11" stroke="#fff" />
              <path d="M6.5 9V5M4.5 6.5l2-2 2 2" stroke="#fff" />
            </S>
          </WinBtn>
          <WinBtn>
            <S w={9} h={2}>
              <rect width="9" height="2" fill="#fff" />
            </S>
          </WinBtn>
          <WinBtn>
            <S w={10}>
              <path d="M2.5 2.5V.5h7v6h-2M.5 3.5h7v6h-7z" stroke="#fff" />
            </S>
          </WinBtn>
          <WinBtn>
            <S w={10}>
              <path d="m.5.5 9 9m0-9-9 9" stroke="#fff" strokeWidth="1.6" />
            </S>
          </WinBtn>
        </WinControls>
      </TitleBar>

      <TabBar>
        <Tab $w={63} $pr={5}>Arquivo</Tab>
        <Tab $w={97} $active>Página Inicial</Tab>
        <Tab $w={61}>Inserir</Tab>
        <Tab $w={121}>Layout da Página</Tab>
        <Tab $w={78}>Fórmulas</Tab>
        <Tab $w={62}>Dados</Tab>
        <Tab $w={69}>Revisão</Tab>
        <Tab $w={58}>Exibir</Tab>
        <TellMe>
          <Bulb />
          O que você deseja fazer...
        </TellMe>
        <SignIn>Entrar</SignIn>
        <Share>
          <ShareI />
          Compartilhar
        </Share>
      </TabBar>

      <Ribbon>
        <Group1 />
        <Group2 />
        <Group3 />
        <Group4 />
        <Group5 />
        <Group6 />
        <Group7 />
        <Collapse>
          <S w={9} h={14} style={{ marginBottom: -2 }}>
            <path d="m1 9 3.5-3.5L8 9" stroke="#555" strokeWidth="1.4" />
          </S>
        </Collapse>
      </Ribbon>

      <FormulaBar>
        <NameBox>
          E6 <Caret />
        </NameBox>
        <Dots>
          <S w={3} h={11}>
            <path d="M0 1h3M0 5.5h3M0 10h3" stroke="#aaa" strokeWidth="1.5" />
          </S>
        </Dots>
        <FxBox>
          <S w={11}>
            <path d="m1 1 9 9m0-9-9 9" stroke="#b5b5b5" strokeWidth="1.4" />
          </S>
          <S w={13} h={11}>
            <path d="m1 6 4 4 7-9" stroke="#b5b5b5" strokeWidth="1.6" />
          </S>
          <Letter $italic $serif $bold $size={14}>fx</Letter>
        </FxBox>
        <Formula>
          =SOMARPRODUTO(--(A3:A10="PAULO")*(SUBSTITUIR(C3:C10;(DIREITA(C3:C10;2));"")*1))
          <S w={10} h={6}>
            <path d="m1 1 4 4 4-4" stroke="#555" strokeWidth="1.3" />
          </S>
        </Formula>
      </FormulaBar>

      <Sheet>
        <GridClip>
          <Grid>
            <Corner>
              <S w={13} h={13}>
                <path d="M13 0v13H0z" fill="#b5b5b5" />
              </S>
            </Corner>
            {cols.map(c => (
              <ColHead key={c} $on={c === "E"}>{c}</ColHead>
            ))}
            {rows.map(r => (
              <React.Fragment key={r}>
                <RowHead $on={r === 6}>{r < 24 ? r : ""}</RowHead>
                {cols.map(c => {
                  const v = cells[r] && cells[r][c];
                  return (
                    <Cell key={c} $num={c === "E"}>
                      {v}
                      {r === 6 && c === "E" && <Selection />}
                    </Cell>
                  );
                })}
              </React.Fragment>
            ))}
          </Grid>
        </GridClip>
        <VScroll>
          <ScrollBtn>
            <S w={9} h={5}>
              <path d="M0 5h9L4.5 0z" fill="#777" />
            </S>
          </ScrollBtn>
          <VThumb />
          <ScrollBtn $h={14}>
            <S w={9} h={5}>
              <path d="M0 0h9L4.5 5z" fill="#777" />
            </S>
          </ScrollBtn>
        </VScroll>
      </Sheet>

      <SheetBar>
        <NavBtn $ml={14.5}>
          <S w={5} h={9}>
            <path d="M5 0v9L0 4.5z" fill="#bdbdbd" />
          </S>
        </NavBtn>
        <NavBtn>
          <S w={5} h={9}>
            <path d="M0 0v9l5-4.5z" fill="#bdbdbd" />
          </S>
        </NavBtn>
        <SheetTab>Planilha1</SheetTab>
        <AddSheet>
          <S w={16}>
            <circle cx="8" cy="8" r="7" stroke="#c4c4c4" strokeWidth="1.3" />
            <path d="M8 4v8M4 8h8" stroke="#c4c4c4" strokeWidth="1.6" />
          </S>
        </AddSheet>
        <DotsH>
          <S w={3} h={11}>
            <path d="M0 1h3M0 5.5h3M0 10h3" stroke="#999" strokeWidth="1.5" />
          </S>
        </DotsH>
        <HScroll>
          <ScrollBtn $h={14}>
            <S w={5} h={9}>
              <path d="M5 0v9L0 4.5z" fill="#555" />
            </S>
          </ScrollBtn>
          <HTrack />
          <ScrollBtn $h={14}>
            <S w={5} h={9}>
              <path d="M0 0v9l5-4.5z" fill="#555" />
            </S>
          </ScrollBtn>
        </HScroll>
      </SheetBar>

      <StatusBar>
        <StatusText>Pronto</StatusText>
        <ViewBtn $active>
          <S w={13}>
            <path d="M.5.5h12v12H.5zM4.5.5v12M8.5.5v12M.5 4.5h12M.5 8.5h12" stroke="#777" />
          </S>
        </ViewBtn>
        <ViewBtn>
          <S w={14}>
            <path d="M.5.5h13v13H.5z" stroke="#777" />
            <path d="M3.5 3.5h7v7h-7zM5 6h4M5 8h4" stroke="#777" />
          </S>
        </ViewBtn>
        <ViewBtn>
          <S w={14} h={13}>
            <path d="M.5.5h13v12H.5zM.5 8.5H9V.5" stroke="#777" />
          </S>
        </ViewBtn>
        <ZoomSign $w={15}>
          <S w={6} h={2}><rect width="6" height="2" fill="#666" /></S>
        </ZoomSign>
        <ZoomTrack>
          <ZoomThumb />
        </ZoomTrack>
        <ZoomSign $w={15}>
          <S w={8}><path d="M0 4h8M4 0v8" stroke="#666" strokeWidth="2" /></S>
        </ZoomSign>
        <ZoomValue>100%</ZoomValue>
      </StatusBar>

      <Taskbar>
        <TaskSlot><TaskFace><IeLogo /></TaskFace></TaskSlot>
        <TaskSlot><TaskFace><OutlookLogo /></TaskFace></TaskSlot>
        <TaskSlot><TaskFace $open><FolderLogo /></TaskFace></TaskSlot>
        <TaskSlot>
          <TaskFace $active><OfficeLogo color="#1e7145" light="#fff" letter="X" /></TaskFace>
          <TaskEdge />
        </TaskSlot>
        <TaskSlot><TaskFace $open><OfficeLogo color="#2a5699" light="#fff" letter="W" /></TaskFace></TaskSlot>
        <TaskSlot><TaskFace><PptLogo /></TaskFace></TaskSlot>
        <TaskSlot><TaskFace><OfficeLogo color="#80397b" light="#fff" letter="N" /></TaskFace></TaskSlot>
        <TaskSlot><TaskFace><ChromeLogo /></TaskFace></TaskSlot>
        <TaskSlot><TaskFace><CalcLogo /></TaskFace></TaskSlot>
        <TaskSlot>
          <TaskFace $open><FirefoxLogo /></TaskFace>
          <TaskEdge />
        </TaskSlot>
        <TaskSlot><TaskFace $open><PaintLogo /></TaskFace></TaskSlot>
        <Tray>
          <TrayItem $w={24}>
            <S w={8} h={4}><path d="M0 4h8L4 0z" fill="#fff" /></S>
          </TrayItem>
          <TrayItem $w={24}>
            <S w={16}>
              <path d="M1.5 1v14" stroke="#fff" strokeWidth="1.2" />
              <path d="M2 2h7l1 2h5l-3 5H7L6 7H2z" fill="#fff" />
            </S>
          </TrayItem>
          <TrayItem $w={26}>
            <S w={16}>
              <path d="M1 4h5v5H1zM3.5 9v6M2 1v3M5 1v3" stroke="#fff" strokeWidth="1.3" />
              <rect x="9" y="2.5" width="6.5" height="13" stroke="#fff" />
              <rect x="11" y="7" width="3" height="7" fill="#fff" />
            </S>
          </TrayItem>
          <TrayItem $w={20}>
            <S w={16}>
              <path d="M1 13h2v2H1zM5 11h2v4H5zM9 7h2v8H9zM13 3h2v12h-2z" fill="#fff" />
            </S>
          </TrayItem>
          <Clock>
            19:08
            <br />
            03/10/2018
          </Clock>
        </Tray>
      </Taskbar>
    </Page>
  );
}
